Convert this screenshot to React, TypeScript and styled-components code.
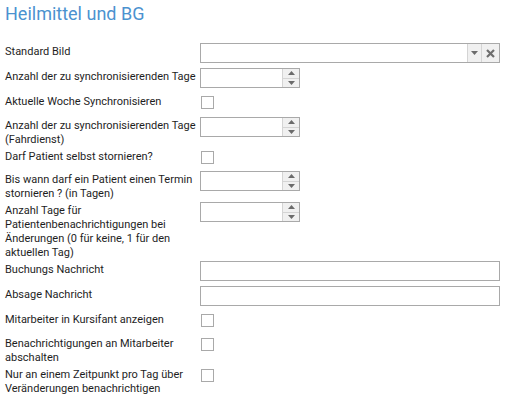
import * as React from "react";
import styled, { createGlobalStyle } from "styled-components";

const GlobalStyle = createGlobalStyle`
  html, body {
    margin: 0;
    padding: 0;
    background: #ffffff;
  }
  body {
    font-family: Roboto, "Liberation Sans", sans-serif;
    font-size: 11px;
    color: #1e1e1e;
  }
`;

const Page = styled.div`
  width: 505px;
  height: 395px;
  padding: 0 5px;
  box-sizing: border-box;
  overflow: hidden;
`;

const Title = styled.h1`
  margin: 3px 0 18px 0;
  font-size: 18px;
  line-height: 22px;
  font-weight: normal;
  color: #4b92cf;
`;

const Row = styled.div<{ $min?: number }>`
  display: flex;
  align-items: flex-start;
  min-height: ${(p) => p.$min ?? 25}px;
`;

const Label = styled.div`
  width: 195px;
  flex: none;
  line-height: 14px;
  padding: 2px 0 1px 0;
  white-space: nowrap;
`;

const Box = styled.div<{ $width: number }>`
  width: ${(p) => p.$width}px;
  height: 20px;
  box-sizing: border-box;
  border: 1px solid #a9a9a9;
  background: #ffffff;
  display: flex;
  justify-content: flex-end;
`;

const Field = styled.div`
  flex: 1;
`;

const SideButton = styled.div<{ $width: number }>`
  width: ${(p) => p.$width}px;
  height: 100%;
  border-left: 1px solid #d4d4d4;
  background: #f0f0f0;
  display: flex;
  align-items: center;
  justify-content: center;
`;

const SpinColumn = styled.div`
  width: 16px;
  height: 100%;
  border-left: 1px solid #d4d4d4;
  display: flex;
  flex-direction: column;
`;

const SpinHalf = styled.div<{ $top?: boolean }>`
  flex: 1;
  background: #f0f0f0;
  border-bottom: ${(p) => (p.$top ? "1px solid #d4d4d4" : "none")};
  display: flex;
  align-items: center;
  justify-content: center;
`;

const Check = styled.div`
  width: 13px;
  height: 13px;
  box-sizing: border-box;
  margin: 3px 0 0 1px;
  border: 1px solid #a9a9a9;
  background: #ffffff;
`;

const Arrow = ({ up }: { up?: boolean }) => (
  <svg width="7" height="4" viewBox="0 0 7 4">
    <path d={up ? "M0 4 L3.5 0 L7 4 Z" : "M0 0 L7 0 L3.5 4 Z"} fill="#6b6b6b" />
  </svg>
);

const Cross = () => (
  <svg width="9" height="9" viewBox="0 0 9 9">
    <path d="M1 1 L8 8 M8 1 L1 8" stroke="#6e6e6e" strokeWidth="2.2" />
  </svg>
);

const Select = () => (
  <Box $width={300}>
    <Field />
    <SideButton $width={13}>
      <Arrow />
    </SideButton>
    <SideButton $width={17}>
      <Cross />
    </SideButton>
  </Box>
);

const Spin = () => (
  <Box $width={100}>
    <Field />
    <SpinColumn>
      <SpinHalf $top>
        <Arrow up />
      </SpinHalf>
      <SpinHalf>
        <Arrow />
      </SpinHalf>
    </SpinColumn>
  </Box>
);

const TextInput = () => <Box $width={300} />;

export default function App() {
  return (
    <Page>
      <GlobalStyle />
      <Title>Heilmittel und BG</Title>
      <Row>
        <Label>Standard Bild</Label>
        <Select />
      </Row>
      <Row>
        <Label>Anzahl der zu synchronisierenden Tage</Label>
        <Spin />
      </Row>
      <Row $min={24}>
        <Label>Aktuelle Woche Synchronisieren</Label>
        <Check />
      </Row>
      <Row>
        <Label>
          Anzahl der zu synchronisierenden Tage
          <br />
          (Fahrdienst)
        </Label>
        <Spin />
      </Row>
      <Row $min={23}>
        <Label>Darf Patient selbst stornieren?</Label>
        <Check />
      </Row>
      <Row>
        <Label>
          Bis wann darf ein Patient einen Termin
          <br />
          stornieren ? (in Tagen)
        </Label>
        <Spin />
      </Row>
      <Row>
        <Label>
          Anzahl Tage für
          <br />
          Patientenbenachrichtigungen bei
          <br />
          Änderungen (0 für keine, 1 für den
          <br />
          aktuellen Tag)
        </Label>
        <Spin />
      </Row>
      <Row>
        <Label>Buchungs Nachricht</Label>
        <TextInput />
      </Row>
      <Row>
        <Label>Absage Nachricht</Label>
        <TextInput />
      </Row>
      <Row $min={24}>
        <Label>Mitarbeiter in Kursifant anzeigen</Label>
        <Check />
      </Row>
      <Row>
        <Label>
          Benachrichtigungen an Mitarbeiter
          <br />
          abschalten
        </Label>
        <Check />
      </Row>
      <Row>
        <Label>
          Nur an einem Zeitpunkt pro Tag über
          <br />
          Veränderungen benachrichtigen
        </Label>
        <Check />
      </Row>
    </Page>
  );
}
